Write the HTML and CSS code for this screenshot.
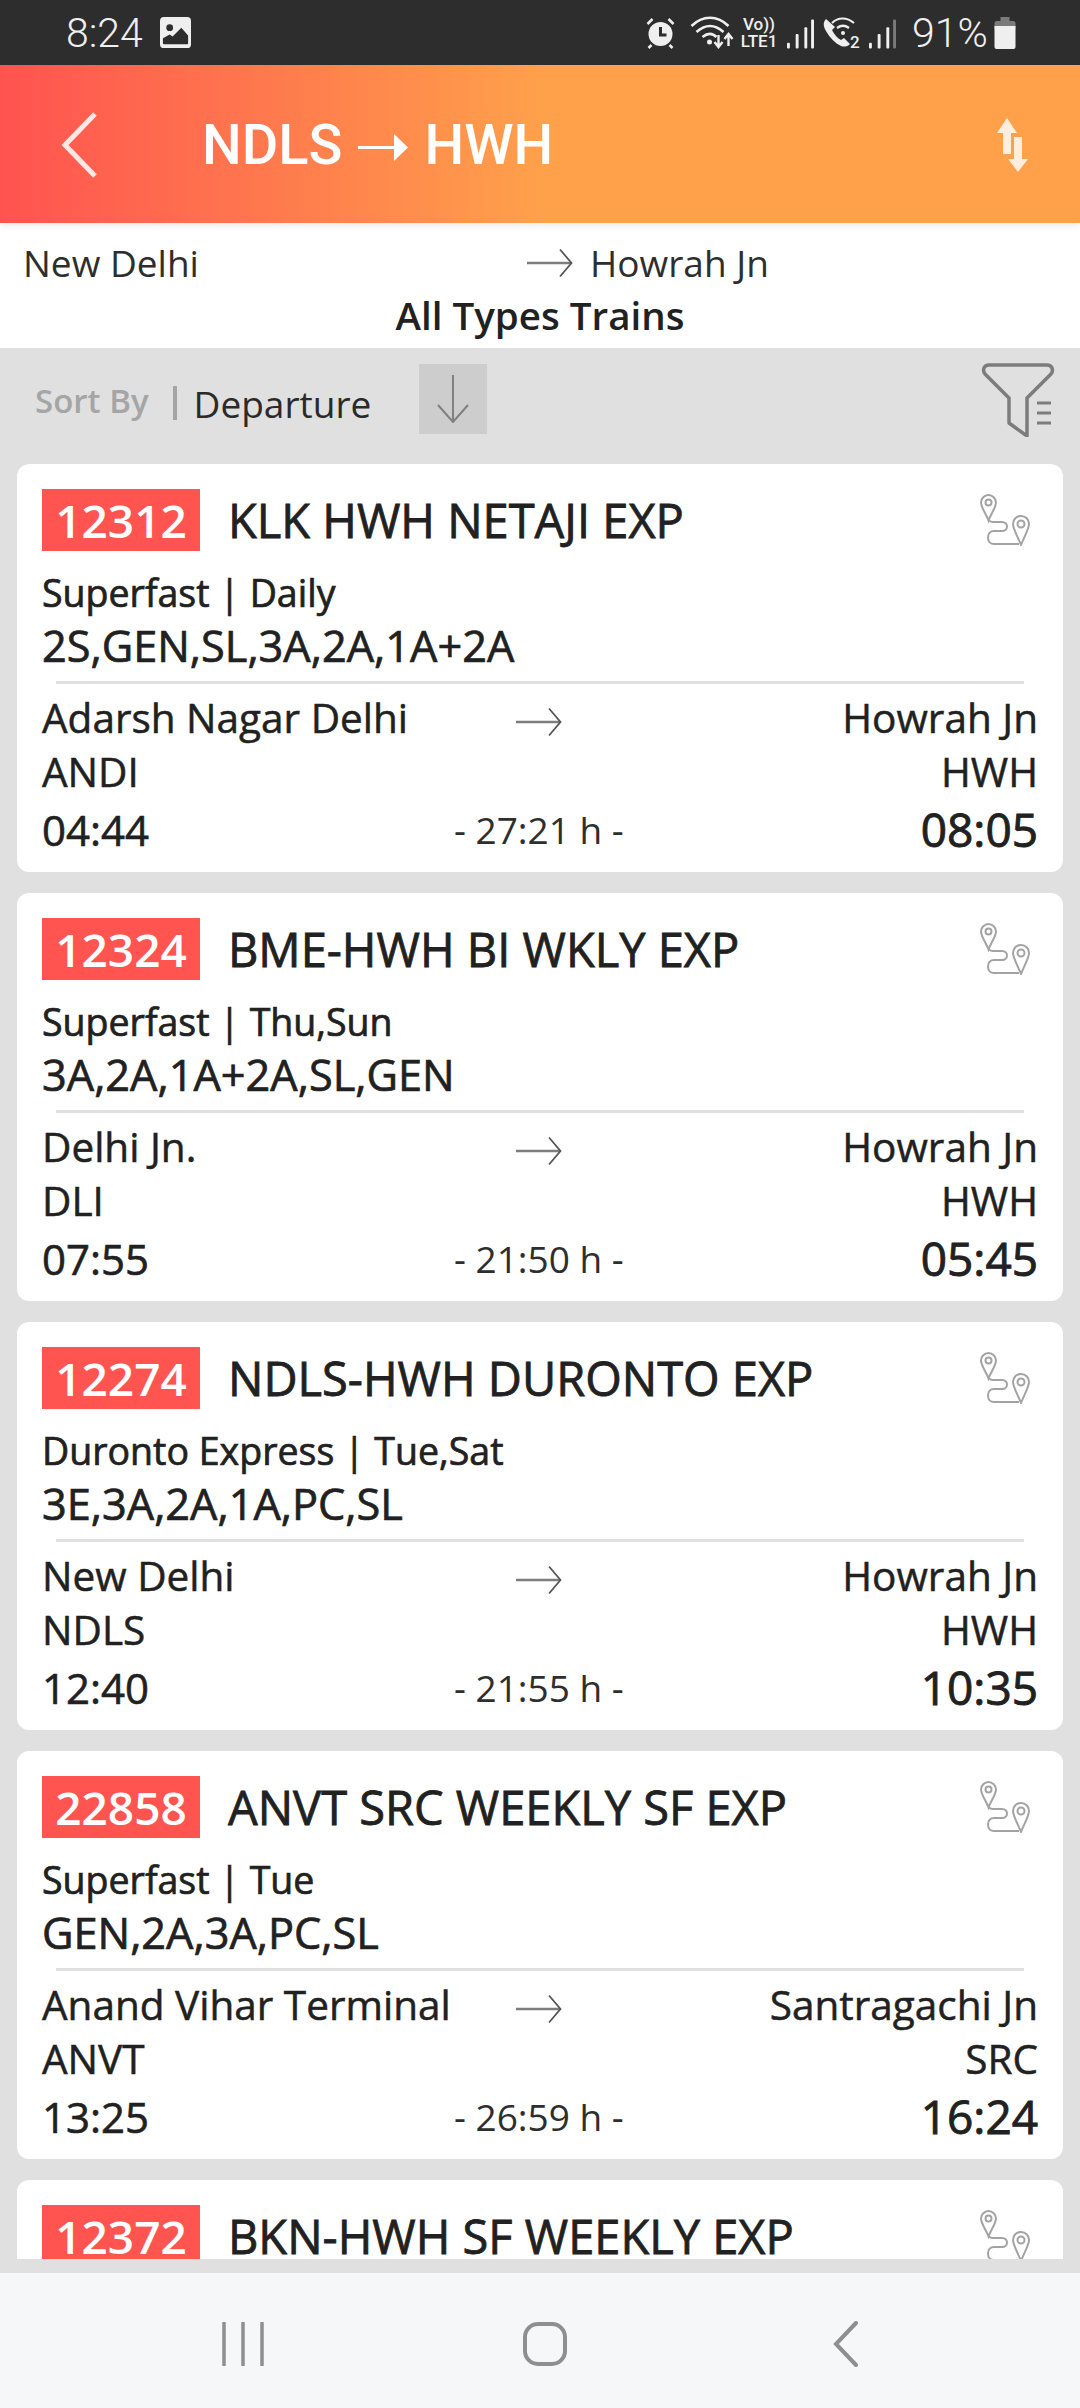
FILE: index.html
```html
<!DOCTYPE html>
<html lang="en">
<head>
<meta charset="utf-8">
<title>NDLS to HWH</title>
<link rel="stylesheet" href="styles.css">
</head>
<body>
<svg class="defs" width="0" height="0" aria-hidden="true">
  <symbol id="route" viewBox="0 0 50 52">
    <g fill="none" stroke="#a3a3a3" stroke-width="2">
      <path d="M8.500 1c-4 0-7.500 3.500-7.500 7.500 0 5 5 11 7.500 18 2.500-7 7.500-13 7.500-18C16 4.500 12.500 1 8.500 1z"/>
      <circle cx="8.500" cy="8.500" r="3"/>
      <path d="M41 22c-4.500 0-8 3.500-8 8 0 5 5 13 8 21 3-8 8-16 8-21 0-4.500-3.500-8-8-8z"/>
      <circle cx="41" cy="30" r="3.500"/>
      <path d="M9 26.500c1 1 2 1.500 4 1.500h9c3 0 5 2 5 4.500s-2 4.500-5 4.500h-8c-3.500 0-6 2.500-6 6.500s2.500 6.500 6 6.500h25"/>
    </g>
  </symbol>
  <symbol id="arrow" viewBox="0 0 46 30">
    <path d="M0 15H44" fill="none" stroke="#7d7d7d" stroke-width="2.500"/>
    <path d="M33 1.500 44.500 15 33 28.500" fill="none" stroke="#555" stroke-width="1.800"/>
  </symbol>
</svg>
<div class="page">
  <div class="statusbar">
    <div class="status-left">
      <span class="clock">8:24</span>
      <svg class="pic" viewBox="0 0 32 32"><rect width="32" height="32" rx="4" fill="#efefef"/><circle cx="10" cy="11" r="3.500" fill="#2d2d2d"/><path d="M3 27v-5l7-4 3 2 9-9 7 8v8c0 .6-.4 1-1 1H4c-.6 0-1-.4-1-1z" fill="#2d2d2d"/></svg>
    </div>
    <div class="status-right">
      <svg class="s-alarm" viewBox="0 0 30 32"><circle cx="15" cy="17" r="12" fill="#efefef"/><path d="M2 7l5-5M28 7l-5-5M6 28l-3 3M24 28l3 3" stroke="#efefef" stroke-width="2.500" fill="none"/><path d="M15 10v8h6" stroke="#2d2d2d" stroke-width="3" fill="none"/></svg>
      <svg class="s-wifi" viewBox="0 0 44 34"><g fill="none" stroke="#efefef" stroke-width="2.600"><path d="M1 10C12-1 27-1 38 10"/><path d="M6 16C15 8 24 8 33 16"/><path d="M12 21C17 17 22 17 26 21"/></g><circle cx="19" cy="26" r="2.500" fill="#efefef"/><path d="M28 19v11M24 26l4 5 4-5M38 30V18M34 23l4-5 4 5" fill="none" stroke="#efefef" stroke-width="2.400"/></svg>
      <span class="volte"><span>Vo))</span><span>LTE1</span></span>
      <svg class="s-bars" viewBox="0 0 28 30"><g fill="#efefef"><rect x="0" y="24" width="3" height="6" rx="1"/><rect x="9" y="15" width="3" height="15" rx="1"/><rect x="18" y="8" width="3" height="22" rx="1"/><rect x="25" y="0" width="3" height="30" rx="1"/></g></svg>
      <svg class="s-call" viewBox="0 0 38 36"><path d="M3 2c-3 3-3 7 0 12 4 7 9 12 15 15 3 1 6 1 9-2l-6-6-3 2c-4-2-7-6-9-10l3-3z" fill="#efefef"/><g fill="none" stroke="#efefef" stroke-width="2.200"><path d="M9 6C15 0 24 0 31 6"/><path d="M14 11c4-3 8-3 12 0"/></g><circle cx="20" cy="16" r="2" fill="#efefef"/><text x="27" y="31" class="s-two">2</text></svg>
      <svg class="s-bars s-bars2" viewBox="0 0 28 30"><g fill="#efefef"><rect x="0" y="24" width="3" height="6" rx="1"/><rect x="9" y="15" width="3" height="15" rx="1"/><rect x="18" y="8" width="3" height="22" rx="1"/></g><rect x="25" y="0" width="3" height="30" rx="1" fill="#7a7a7a"/></svg>
      <span class="pct">91%</span>
      <svg class="s-batt" viewBox="0 0 21 32"><path d="M6 0h9v4h4c1 0 2 1 2 2v6H0V6c0-1 1-2 2-2h4z" fill="#7a7a7a"/><path d="M0 9h21v21c0 1-1 2-2 2H2c-1 0-2-1-2-2z" fill="#efefef"/></svg>
    </div>
  </div>

  <header class="appbar">
    <svg class="back" viewBox="0 0 38 68"><path d="M34 3 4 34l30 31" fill="none" stroke="#fff" stroke-opacity=".85" stroke-width="5"/></svg>
    <h1 class="title">NDLS <svg class="title-arrow" viewBox="0 0 50 27"><path d="M0 13.500h36" stroke="#fff" stroke-width="3"/><path d="M36 0l14 13.500-14 13.500z" fill="#fff"/></svg> HWH</h1>
    <svg class="swap" viewBox="0 0 31 54"><g fill="#fff" fill-opacity=".82"><path d="M10 0l10 15h-6v21H6V15H0z"/><path d="M17 19h8v22h6L21 54 11 41h6z"/></g></svg>
  </header>

  <section class="journey">
    <div class="journey-row">
      <span class="from">New Delhi</span>
      <svg class="j-arrow"><use href="#arrow"/></svg>
      <span class="to">Howrah Jn</span>
    </div>
    <div class="types">All Types Trains</div>
  </section>

  <section class="sortbar">
    <span class="sort-label">Sort By</span>
    <span class="sort-sep"></span>
    <span class="sort-value">Departure</span>
    <span class="sort-btn"><svg viewBox="0 0 32 48"><path d="M16 0v46M1 30l15 17 15-17" fill="none" stroke="#808080" stroke-width="2"/></svg></span>
    <svg class="filter" viewBox="0 0 74 74"><path d="M8 2h58c5 0 7 5 4 9L46 35v38L28 60V35L4 11C1 7 3 2 8 2z" fill="none" stroke="#7c7c7c" stroke-width="3.500" stroke-linejoin="round"/><path d="M56 40h14M56 50h14M56 60h14" stroke="#7c7c7c" stroke-width="3"/></svg>
  </section>

  <main class="list">
    <div class="list-clip">
      <article class="card">
        <div class="card-head"><span class="num">12312</span><span class="name">KLK HWH NETAJI EXP</span><svg class="route"><use href="#route"/></svg></div>
        <div class="kind">Superfast | Daily</div>
        <div class="classes">2S,GEN,SL,3A,2A,1A+2A</div>
        <div class="rule"></div>
        <div class="st-row"><span class="st">Adarsh Nagar Delhi</span><svg class="c-arrow"><use href="#arrow"/></svg><span class="st st-end">Howrah Jn</span></div>
        <div class="code-row"><span>ANDI</span><span>HWH</span></div>
        <div class="time-row"><span class="time">04:44</span><span class="dur">- 27:21 h -</span><span class="time time-end">08:05</span></div>
      </article>
      <article class="card">
        <div class="card-head"><span class="num">12324</span><span class="name">BME-HWH BI WKLY EXP</span><svg class="route"><use href="#route"/></svg></div>
        <div class="kind">Superfast | Thu,Sun</div>
        <div class="classes">3A,2A,1A+2A,SL,GEN</div>
        <div class="rule"></div>
        <div class="st-row"><span class="st">Delhi Jn.</span><svg class="c-arrow"><use href="#arrow"/></svg><span class="st st-end">Howrah Jn</span></div>
        <div class="code-row"><span>DLI</span><span>HWH</span></div>
        <div class="time-row"><span class="time">07:55</span><span class="dur">- 21:50 h -</span><span class="time time-end">05:45</span></div>
      </article>
      <article class="card">
        <div class="card-head"><span class="num">12274</span><span class="name">NDLS-HWH DURONTO EXP</span><svg class="route"><use href="#route"/></svg></div>
        <div class="kind">Duronto Express | Tue,Sat</div>
        <div class="classes">3E,3A,2A,1A,PC,SL</div>
        <div class="rule"></div>
        <div class="st-row"><span class="st">New Delhi</span><svg class="c-arrow"><use href="#arrow"/></svg><span class="st st-end">Howrah Jn</span></div>
        <div class="code-row"><span>NDLS</span><span>HWH</span></div>
        <div class="time-row"><span class="time">12:40</span><span class="dur">- 21:55 h -</span><span class="time time-end">10:35</span></div>
      </article>
      <article class="card">
        <div class="card-head"><span class="num">22858</span><span class="name">ANVT SRC WEEKLY SF EXP</span><svg class="route"><use href="#route"/></svg></div>
        <div class="kind">Superfast | Tue</div>
        <div class="classes">GEN,2A,3A,PC,SL</div>
        <div class="rule"></div>
        <div class="st-row"><span class="st">Anand Vihar Terminal</span><svg class="c-arrow"><use href="#arrow"/></svg><span class="st st-end">Santragachi Jn</span></div>
        <div class="code-row"><span>ANVT</span><span>SRC</span></div>
        <div class="time-row"><span class="time">13:25</span><span class="dur">- 26:59 h -</span><span class="time time-end">16:24</span></div>
      </article>
      <article class="card">
        <div class="card-head"><span class="num">12372</span><span class="name">BKN-HWH SF WEEKLY EXP</span><svg class="route"><use href="#route"/></svg></div>
      </article>
    </div>
  </main>

  <nav class="navbar">
    <svg class="n-recent" viewBox="0 0 42 44"><path d="M2 1v42M21 1v42M40 1v42" stroke="#8f8f8f" stroke-width="3.500" stroke-linecap="round"/></svg>
    <svg class="n-home" viewBox="0 0 44 44"><rect x="2" y="2" width="40" height="40" rx="13" fill="none" stroke="#8f8f8f" stroke-width="4"/></svg>
    <svg class="n-back" viewBox="0 0 26 46"><path d="M23 2 3 23l20 21" fill="none" stroke="#8f8f8f" stroke-width="4" stroke-linecap="round"/></svg>
  </nav>
</div>
</body>
</html>
```
FILE: styles.css
```css
* { box-sizing: border-box; margin: 0; padding: 0; }
html, body { width: 1080px; height: 2408px; overflow: hidden; }
body { font-family: "Open Sans", "Liberation Sans", sans-serif; color: #212121; background: #e0e0e0; }
.defs { position: absolute; }
.page { width: 1080px; height: 2408px; display: flex; flex-direction: column; }

.statusbar { height: 65px; flex: none; background: #2d2d2d; color: #efefef; display: flex; justify-content: space-between; align-items: center; padding: 0 64px 0 66px; font-family: Roboto, sans-serif; }
.status-left { display: flex; align-items: center; gap: 17px; }
.clock { font-size: 41px; line-height: 48px; font-weight: 300; }
.pic { width: 31px; height: 31px; }
.status-right { display: flex; align-items: center; }
.s-alarm { width: 31px; height: 32px; margin-right: 14px; }
.s-wifi { width: 45px; height: 34px; }
.volte { display: flex; flex-direction: column; font-size: 17px; line-height: 17px; margin-left: 5px; width: 38px; align-items: center; font-weight: 500; white-space: nowrap; }
.s-bars { width: 27px; height: 30px; margin-left: 9px; margin-top: 2px; }
.s-call { width: 38px; height: 36px; margin-left: 9px; margin-top: 4px; }
.s-bars2 { margin-left: 8px; }
.s-two { font: 500 17px Roboto, sans-serif; fill: #efefef; }
.pct { font-size: 41px; line-height: 48px; margin-left: 16px; width: 75px; font-weight: 300; white-space: nowrap; }
.s-batt { width: 22px; height: 32px; margin-left: 7px; }

.appbar { height: 158px; flex: none; position: relative; z-index: 1; background: linear-gradient(90deg, #ff5350 0%, #ffa04b 50%); display: flex; align-items: center; padding: 2px 52px 0 61px; box-shadow: 0 3px 6px rgba(0,0,0,.08); }
.back { width: 38px; height: 68px; flex: none; }
.title { flex: 1; margin-left: 103px; font: 500 56px Roboto, sans-serif; color: #fff; display: flex; align-items: center; gap: 16px; }
.title-arrow { width: 50px; height: 27px; margin-top: 4px; }
.swap { width: 31px; height: 54px; flex: none; }

.journey { height: 125px; flex: none; background: #fff; padding-top: 12px; }
.journey-row { height: 55px; display: flex; align-items: center; font-size: 37px; padding-left: 23px; color: #2e2e2e; }
.from { width: 504px; }
.j-arrow { width: 46px; height: 30px; }
.to { margin-left: 17px; }
.types { text-align: center; font-size: 38.5px; font-weight: 600; line-height: 50px; }

.sortbar { height: 116px; flex: none; background: #e0e0e0; display: flex; align-items: center; padding-left: 35px; position: relative; }
.sort-label { font-size: 33px; font-weight: 600; color: #a5a5a5; margin-top: -12px; }
.sort-sep { width: 4px; height: 34px; background: #a5a5a5; margin: -6px 17px 0 24px; }
.sort-value { font-size: 37px; color: #2a2a2a; width: 225px; margin-top: -5px; }
.sort-btn { width: 68px; height: 70px; background: #cdcdcd; display: flex; align-items: center; justify-content: center; margin-top: -14px; }
.sort-btn svg { width: 32px; height: 48px; }
.filter { position: absolute; left: 981px; top: 15px; width: 74px; height: 74px; }

.list { flex: 1; min-height: 0; padding: 0 17px 14px; }
.list-clip { height: 100%; overflow: hidden; display: flex; flex-direction: column; gap: 21px; border-radius: 12px 12px 0 0; }
.card { flex: none; height: 408px; background: #fff; border-radius: 12px; padding: 25px 25px 0; }
.card-head { height: 62px; display: flex; align-items: center; position: relative; }
.num { width: 158px; height: 62px; background: #ff5450; color: #fff; font-size: 46px; font-weight: 600; display: flex; align-items: center; justify-content: center; }
.name { margin-left: 28px; font-size: 47px; -webkit-text-stroke: .8px #212121; color: #212121; white-space: nowrap; }
.route { position: absolute; left: 938px; top: 5px; width: 50px; height: 52px; }
.kind { margin-top: 19px; font-size: 37.5px; -webkit-text-stroke: .7px #212121; line-height: 46px; }
.classes { margin-top: 5px; font-size: 43.3px; -webkit-text-stroke: .7px #212121; line-height: 50px; }
.rule { height: 3px; background: #e0e0e0; margin: 10px 14px 0 14px; }
.st-row { margin-top: 9px; height: 48px; display: flex; align-items: center; font-size: 40.5px; -webkit-text-stroke: .5px #212121; position: relative; justify-content: space-between; }
.c-arrow { position: absolute; left: 474px; top: 14px; width: 46px; height: 30px; }
.code-row { margin-top: 6px; display: flex; justify-content: space-between; font-size: 40.5px; -webkit-text-stroke: .5px #212121; line-height: 50px; }
.time-row { margin-top: 5px; display: flex; justify-content: space-between; align-items: center; height: 54px; position: relative; }
.time { font-size: 42px; -webkit-text-stroke: .6px #212121; }
.time-end { font-size: 46px; -webkit-text-stroke: .9px #212121; }
.dur { position: absolute; left: 412px; font-size: 37px; color: #2e2e2e; }

.navbar { height: 135px; flex: none; background: #f6f7f9; display: flex; align-items: center; position: relative; padding: 6px 0 0 222px; }
.n-recent { width: 42px; height: 44px; }
.n-home { width: 44px; height: 44px; margin-left: 259px; }
.n-back { width: 26px; height: 46px; margin-left: 266px; }
```
